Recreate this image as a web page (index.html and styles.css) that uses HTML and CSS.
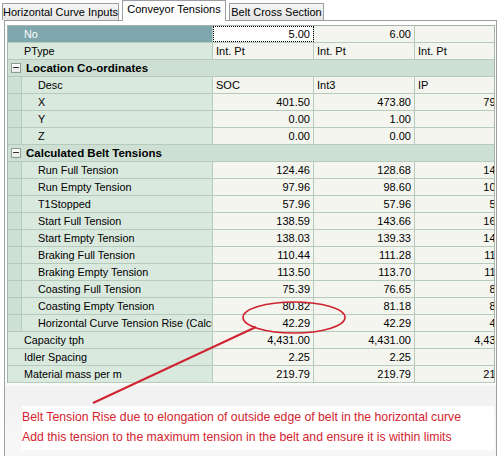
FILE: index.html
```html
<!DOCTYPE html>
<html>
<head>
<meta charset="utf-8">
<link rel="stylesheet" href="styles.css">
</head>
<body>
<div class="tabs">
  <div class="tab t1">Horizontal Curve Inputs</div>
  <div class="tab t2 active">Conveyor Tensions</div>
  <div class="tab t3">Belt Cross Section</div>
</div>
<div class="panel">
  <div class="grid">
    <div class="row sel"><div class="name top">No</div><div class="v num focus">5.00</div><div class="v num">6.00</div><div class="v num last"></div></div>
    <div class="row"><div class="name top">PType</div><div class="v">Int. Pt</div><div class="v">Int. Pt</div><div class="v last">Int. Pt</div></div>
    <div class="row cat"><span class="exp"></span><span class="cat-t">Location Co-ordinates</span></div>
    <div class="row"><div class="gut"></div><div class="name child">Desc</div><div class="v">SOC</div><div class="v">Int3</div><div class="v last">IP</div></div>
    <div class="row"><div class="gut"></div><div class="name child">X</div><div class="v num">401.50</div><div class="v num">473.80</div><div class="v num last">794.30</div></div>
    <div class="row"><div class="gut"></div><div class="name child">Y</div><div class="v num">0.00</div><div class="v num">1.00</div><div class="v num last">3.00</div></div>
    <div class="row"><div class="gut"></div><div class="name child">Z</div><div class="v num">0.00</div><div class="v num">0.00</div><div class="v num last">0.00</div></div>
    <div class="row cat"><span class="exp"></span><span class="cat-t">Calculated Belt Tensions</span></div>
    <div class="row"><div class="gut"></div><div class="name child">Run Full Tension</div><div class="v num">124.46</div><div class="v num">128.68</div><div class="v num last">145.12</div></div>
    <div class="row"><div class="gut"></div><div class="name child">Run Empty Tension</div><div class="v num">97.96</div><div class="v num">98.60</div><div class="v num last">101.27</div></div>
    <div class="row"><div class="gut"></div><div class="name child">T1Stopped</div><div class="v num">57.96</div><div class="v num">57.96</div><div class="v num last">57.96</div></div>
    <div class="row"><div class="gut"></div><div class="name child">Start Full Tension</div><div class="v num">138.59</div><div class="v num">143.66</div><div class="v num last">163.20</div></div>
    <div class="row"><div class="gut"></div><div class="name child">Start Empty Tension</div><div class="v num">138.03</div><div class="v num">139.33</div><div class="v num last">144.51</div></div>
    <div class="row"><div class="gut"></div><div class="name child">Braking Full Tension</div><div class="v num">110.44</div><div class="v num">111.28</div><div class="v num last">114.66</div></div>
    <div class="row"><div class="gut"></div><div class="name child">Braking Empty Tension</div><div class="v num">113.50</div><div class="v num">113.70</div><div class="v num last">114.50</div></div>
    <div class="row"><div class="gut"></div><div class="name child">Coasting Full Tension</div><div class="v num">75.39</div><div class="v num">76.65</div><div class="v num last">81.71</div></div>
    <div class="row"><div class="gut"></div><div class="name child">Coasting Empty Tension</div><div class="v num">80.82</div><div class="v num">81.18</div><div class="v num last">82.61</div></div>
    <div class="row"><div class="gut"></div><div class="name child">Horizontal Curve Tension Rise (Calculated)</div><div class="v num">42.29</div><div class="v num">42.29</div><div class="v num last">42.29</div></div>
    <div class="row"><div class="name top">Capacity tph</div><div class="v num">4,431.00</div><div class="v num">4,431.00</div><div class="v num last">4,431.00</div></div>
    <div class="row"><div class="name top">Idler Spacing</div><div class="v num">2.25</div><div class="v num">2.25</div><div class="v num last">2.25</div></div>
    <div class="row"><div class="name top">Material mass per m</div><div class="v num">219.79</div><div class="v num">219.79</div><div class="v num last">219.79</div></div>
  </div>
  <div class="note">
    <div>Belt Tension Rise due to elongation of outside edge of belt in the horizontal curve</div>
    <div>Add this tension to the maximum tension in the belt and ensure it is within limits</div>
  </div>
</div>
<svg class="annot" width="498" height="456" viewBox="0 0 498 456">
  <ellipse cx="294" cy="317.5" rx="51" ry="15.5" fill="none" stroke="#cf2330" stroke-width="1.6"/>
  <line x1="256" y1="327" x2="93" y2="403" stroke="#cf2330" stroke-width="2"/>
</svg>
</body>
</html>
```
FILE: styles.css
```css
html, body {
  margin: 0;
  padding: 0;
}
body {
  width: 498px;
  height: 456px;
  overflow: hidden;
  position: relative;
  background: #ffffff;
  font-family: "Liberation Sans", Arial, sans-serif;
  font-size: 11px;
  color: #000;
}
.tabs {
  display: flex;
  align-items: flex-end;
  height: 20px;
  padding-left: 2px;
  position: relative;
  z-index: 2;
}
.tab {
  box-sizing: border-box;
  height: 17px;
  border: 1px solid #9a9fa3;
  border-bottom: none;
  background: linear-gradient(#f7f7f7, #e4e4e4);
  font-size: 11px;
  line-height: 16px;
  text-align: center;
  color: #000;
  white-space: nowrap;
}
.t1 { width: 117px; }
.t2 { width: 104px; margin-left: 3px; }
.t3 { width: 95px; margin-left: 3px; }
.tab.active {
  height: 21px;
  line-height: 17px;
  background: #fdfdfd;
  margin-bottom: -1px;
}
.panel {
  box-sizing: border-box;
  margin-left: 4px;
  width: 493px;
  height: 440px;
  border: 1px solid #9a9fa3;
  background: linear-gradient(#ffffff 0px, #ffffff 362px, #f1f1f1 366px, #f7f7f7 420px);
  padding: 4px 1px 0 2px;
}
.grid {
  box-sizing: border-box;
  width: 488px;
  border: 1px solid #a7b4ab;
  border-bottom: none;
  overflow: hidden;
}
.row {
  display: flex;
  box-sizing: border-box;
  height: 17px;
  border-bottom: 1px solid #b7cbbd;
  line-height: 16px;
  white-space: nowrap;
  flex-shrink: 0;
}
.name, .v, .gut {
  box-sizing: border-box;
  height: 16px;
  border-right: 1px solid #b7cbbd;
  overflow: hidden;
  flex-shrink: 0;
}
.name {
  background: #dae9de;
  font-size: 10.8px;
  padding-left: 16px;
}
.name.top { width: 205px; }
.gut { width: 14px; background: #cde0d3; }
.name.child { width: 191px; }
.v {
  width: 101px;
  background: #f4f5ef;
  padding: 0 3px;
}
.v.last { width: 106px; }
.num { text-align: right; }
.sel .name {
  background: #7ea6ad;
  color: #ffffff;
}
.v.focus {
  background: #ffffff;
  outline: 1px dotted #000;
  outline-offset: -1px;
}
.row.cat {
  background: #cde0d3;
  align-items: center;
  width: 520px;
}
.exp {
  box-sizing: border-box;
  width: 10px;
  height: 10px;
  margin-left: 3px;
  border: 1px solid #8d9b92;
  background: linear-gradient(#ffffff, #e4e8e4);
  position: relative;
  flex-shrink: 0;
}
.exp::after {
  content: "";
  position: absolute;
  left: 1px;
  top: 3px;
  width: 6px;
  height: 1px;
  background: #333;
}
.cat-t {
  font-weight: bold;
  font-size: 11.5px;
  margin-left: 5px;
}
.note {
  margin: 23px 0 0 15px;
  width: 472px;
  background: #ffffff;
  padding: 1px 0 3px 0;
  color: #d3232f;
  font-size: 12.25px;
  line-height: 20px;
  white-space: nowrap;
}
.annot {
  position: absolute;
  left: 0;
  top: 0;
  pointer-events: none;
  z-index: 3;
}
```
